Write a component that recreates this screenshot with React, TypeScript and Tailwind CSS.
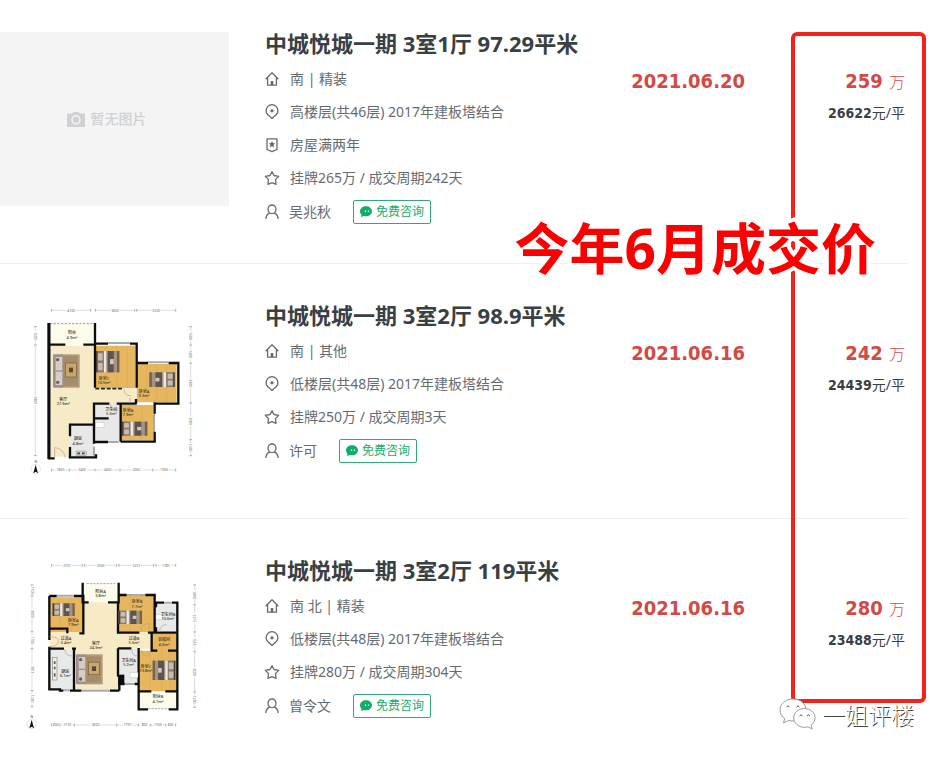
import type { ReactNode } from "react";

type IconName = "home" | "pin" | "badge" | "star" | "user";

type Listing = {
  title: string;
  plan: ReactNode;
  facts: { icon: IconName; text: string }[];
  agent: string;
  date: string;
  total: string;
  unit: string;
};

const iconPaths: Record<IconName, ReactNode> = {
  home: (
    <>
      <path d="M0.6 7.2 7 .8l6.400 6.400M2.600 5.800v7.400h8.800V5.800" />
      <path d="M7 13.200V9" strokeWidth="2.600" />
    </>
  ),
  pin: (
    <>
      <path d="M7 13.400 2.700 9.600a5.900 5.900 0 1 1 8.600 0Z" />
      <circle cx="7" cy="5.800" r="1" fill="currentColor" />
    </>
  ),
  badge: (
    <>
      <path d="M2 .9h10v10.600l-5 2.200-5-2.200Z" />
      <path d="m7 3 1 2.100 2.200.300-1.600 1.600.4 2.300L7 8.200l-2 1.100.4-2.300-1.600-1.600 2.200-.3Z" fill="currentColor" stroke="none" />
    </>
  ),
  star: <path d="m7 .7 2 3.800 4.700.8-3.200 3.300.5 4.700L7 11.700l-4 1.600.5-4.700L.3 5.300 5 4.500Z" />,
  user: (
    <>
      <ellipse cx="7" cy="4.300" rx="4" ry="4.300" />
      <path d="M4.800 7.800C2.300 8.900 1 11 .8 14M9.200 7.800c2.500 1.100 3.800 3.200 4 6.200" />
    </>
  ),
};

function Icon({ name }: { name: IconName }) {
  return (
    <svg viewBox="0 0 14 14" className="h-3.5 w-3.5 shrink-0 overflow-visible" fill="none" stroke="currentColor" strokeWidth="1.3" strokeLinejoin="round" aria-hidden="true">
      {iconPaths[name]}
    </svg>
  );
}

function NoPicture() {
  return (
    <div className="flex h-[174px] w-[229px] shrink-0 items-center justify-center gap-1.5 bg-[#f4f4f4] pr-4">
      <svg viewBox="0 0 18 15" className="h-[15px] w-[18px]" aria-hidden="true">
        <path d="M0 1.500h5L6.500 0h5L13 1.500h5V15H0Z" fill="#cfd1d4" />
        <circle cx="9" cy="7.800" r="4" fill="none" stroke="#f4f4f4" strokeWidth="1.500" />
      </svg>
      <span className="text-sm font-medium text-[#cfd1d4]">暂无图片</span>
    </div>
  );
}

function PlanFrame({ label, children }: { label: string; children: ReactNode }) {
  return (
    <svg viewBox="0 0 229 174" role="img" aria-label={label} className="h-[174px] w-[229px] shrink-0 overflow-visible">
      <g transform="translate(20 -9) scale(.33333)">{children}</g>
    </svg>
  );
}

function Bed({ x, y, w, h, flip = false }: { x: number; y: number; w: number; h: number; flip?: boolean }) {
  return (
    <g transform={flip ? `translate(${x + w} ${y}) scale(-1 1)` : `translate(${x} ${y})`}>
      <rect width={w} height={h} fill="#a39384" />
      <rect width={w * 0.34} height={h} fill="#8a7a6c" />
      <rect width="4" height={h} fill="#4a3d34" />
      <rect x="6" y={h * 0.1} width={w * 0.2} height={h * 0.34} rx="3" fill="#c9bcae" />
      <rect x="6" y={h * 0.56} width={w * 0.2} height={h * 0.34} rx="3" fill="#c9bcae" />
      <rect x={w * 0.34} width={w * 0.1} height={h} fill="#efe9e2" />
      <rect x={w * 0.5} width={w * 0.26} height={h} fill="#5d544e" />
      <rect x={w * 0.6} y={h * 0.38} width={w * 0.16} height={h * 0.24} fill="#cfc8bf" />
      <rect x={w * 0.9} width={w * 0.1} height={h} fill="#7c6148" />
    </g>
  );
}

function Sofa({ x, y, h }: { x: number; y: number; h: number }) {
  return (
    <g transform={`translate(${x} ${y})`}>
      <rect x="24" width="56" height={h} fill="#b19a7b" />
      <rect x="30" y="6" width="44" height={h - 12} fill="#a58c6c" />
      <rect x="38" y={h * 0.26} width="32" height={h * 0.42} fill="#c6a86b" stroke="#75603f" strokeWidth="2" />
      <rect x="48" y={h * 0.4} width="12" height="14" fill="#5e4632" />
      <rect width="30" height={h} rx="4" fill="#9c918a" />
      <rect x="8" y="8" width="20" height={h / 2 - 10} fill="#d6cdc6" />
      <rect x="8" y={h / 2 + 2} width="20" height={h / 2 - 10} fill="#d6cdc6" />
      <circle cx="14" cy="16" r="5" fill="#6b5f5a" />
      <circle cx="14" cy={h - 16} r="5" fill="#6b5f5a" />
    </g>
  );
}

function RoomLabel({ x, y, name, area }: { x: number; y: number; name: string; area: string }) {
  return (
    <text x={x} y={y} textAnchor="middle" fontSize="12" fontWeight="500" fill="#3a3024">
      {name}
      <tspan x={x} dy="13">
        {area}
      </tspan>
    </text>
  );
}

function Ruler({ ticks, at, vertical = false, values }: { ticks: number[]; at: number; vertical?: boolean; values: string[] }) {
  return (
    <g transform={vertical ? `translate(${at} 0) rotate(90) scale(1 -1)` : `translate(0 ${at})`} fontSize="10" fill="#666" textAnchor="middle">
      <path d={ticks.map((t) => `M${t} -4v8`).join("")} stroke="#777" strokeWidth="2" />
      {values.map((v, i) => {
        const mid = (ticks[i] + ticks[i + 1]) / 2;
        return (
          <g key={i}>
            <path d={`M${ticks[i]} 0H${Math.max(ticks[i], mid - 14)}M${Math.min(ticks[i + 1], mid + 14)} 0H${ticks[i + 1]}`} stroke="#ccc" strokeWidth="2" />
            <text transform={vertical ? `translate(${mid} 0) scale(-1 1) rotate(180)` : `translate(${mid} 0)`} y="4">
              {v}
            </text>
          </g>
        );
      })}
    </g>
  );
}

function Compass({ x, y }: { x: number; y: number }) {
  return (
    <g transform={`translate(${x} ${y})`}>
      <circle r="14" fill="#fff" stroke="#ccc" strokeWidth="1.500" />
      <path d="M0-13 7 13 0 8-7 13Z" fill="#111" />
      <text y="-18" fontSize="10" textAnchor="middle" fill="#333">
        N
      </text>
    </g>
  );
}

function PlanA() {
  return (
    <PlanFrame label="三室两厅户型图">
      <Ruler at={46} ticks={[95, 212, 226, 344, 350, 467]} values={["4100", "", "3600", "", "3200"]} />
      <Ruler at={525} ticks={[95, 148, 225, 300, 398, 467]} values={["1800", "2400", "2400", "3000", "1900"]} />
      <Ruler at={46} vertical ticks={[95, 150, 482]} values={["1500", "9800"]} />
      <Ruler at={512} vertical ticks={[95, 150, 205, 324, 434, 482]} values={["1500", "1400", "3300", "3000", "1400"]} />
      <path d="M92 152H222V283H347V327H224V387H150V485H92Z" fill="#f6ebc6" />
      <path d="M92 92H222V148H92Z" fill="#fdfcea" />
      <path d="M226 152H346V280H226ZM350 207H470V322H350ZM304 330H400V436H304Z" fill="#e6b75f" />
      <path d="M258 152v128M290 152v128M322 152v128M380 207v115M410 207v115M440 207v115M330 330v106M365 330v106" stroke="#d8a54d" strokeWidth="1.500" />
      <path d="M224 326H300V438H224ZM150 390H222V484H150Z" fill="#e8e8e8" />
      <rect x="226" y="383" width="26" height="15" fill="#fff" stroke="#aaa" />
      <rect x="168" y="468" width="32" height="14" fill="#cfd6d1" stroke="#777" />
      <path d="M172 475h8M186 475h8" stroke="#444" strokeWidth="5" />
      <path d="M90 86H222" stroke="#999" strokeWidth="3" strokeDasharray="7 4" />
      <path d="M264 144H330M384 202H446M402 356V410M264 441H296M222 455V482" stroke="#a9a9a9" strokeWidth="6" />
      <path
        d="M88 84V490H104M85 149H136M190 149H222M225 84V278M225 146H264M330 146H350V278M350 204H384M446 204H475V326H404M404 322V356M404 410V440H302M302 326V440M264 441H238V441H222V326H268M290 326H350M348 312V326M146 487H228V478M150 487V456M150 424V389H222V446M222 370H266"
        fill="none"
        stroke="#0d0d0d"
        strokeWidth="7"
      />
      <path d="M85 84V492" stroke="#0d0d0d" strokeWidth="6" />
      <path d="M226 281H306" stroke="#222" strokeWidth="5" strokeDasharray="12 5" />
      <path d="M104 488V458Q130 460 136 488M312 281Q312 302 332 302M330 325V308M270 326Q276 350 294 346" fill="none" stroke="#b99a80" strokeWidth="2" />
      <Sofa x={99} y={178} h={100} />
      <Bed x={228} y={168} w={70} h={64} />
      <Bed x={388} y={232} w={76} h={44} flip />
      <Bed x={306} y={380} w={76} h={42} />
      <RoomLabel x={156} y={118} name="阳台" area="4.9m²" />
      <RoomLabel x={130} y={317} name="客厅" area="27.6m²" />
      <RoomLabel x={252} y={254} name="卧室C" area="10.5m²" />
      <RoomLabel x={372} y={294} name="卧室A" area="9.3m²" />
      <RoomLabel x={274} y={348} name="卫生间" area="5.3m²" />
      <RoomLabel x={324} y={351} name="卧室B" area="7.9m²" />
      <RoomLabel x={174} y={436} name="厨房" area="4.8m²" />
      <Compass x={47} y={522} />
    </PlanFrame>
  );
}

function PlanB() {
  return (
    <PlanFrame label="三室两厅两卫户型图">
      <Ruler at={46} ticks={[95, 187, 194, 290, 297, 401, 408, 467]} values={["2707", "", "3000", "", "3213", "", "1785"]} />
      <Ruler at={525} ticks={[95, 120, 163, 290, 355, 392, 437, 467]} values={["800", "1570", "3600", "1797", "800", "1500", "800"]} />
      <Ruler at={36} vertical ticks={[105, 138, 245, 296, 422, 470]} values={["1100", "3000", "1700", "3813", "1400"]} />
      <Ruler at={524} vertical ticks={[105, 164, 246, 305, 426, 472]} values={["1800", "2275", "1555", "3500", "1200"]} />
      <path d="M192 157H293V246H394V296H294V420H164V296H90V244H192Z" fill="#f6ebc6" />
      <path d="M194 104H292V156H194ZM360 426H470V474H360Z" fill="#fdfcea" />
      <path d="M90 142H190V246H90ZM295 138H402V246H295ZM395 250H470V302H395ZM360 302H470V424H360Z" fill="#e6b75f" />
      <path d="M120 142v102M155 142v102M330 138v108M365 138v108M390 302v120M425 252v170M450 252v170" stroke="#d8a54d" strokeWidth="1.500" />
      <path d="M90 298H160V418H90ZM406 162H470V247H406ZM295 296H356V400H295Z" fill="#e8e9e9" />
      <path d="M200 101H286M384 476H446" stroke="#aaa" strokeWidth="3" strokeDasharray="7 3" />
      <path d="M110 137H162M320 135H376M432 158H456M130 421H150M184 422H270M314 402H344" stroke="#aaa" strokeWidth="6" />
      <path
        d="M188 98V157H206M264 157H296V98M88 138H110M162 138H190V250H178M88 138V236H142V250M88 270V238M88 290V418H120V422H130M150 422H184M162 296V420M88 296H132M156 296H168M270 422H298M298 376V422M294 402H314M344 402H356M356 294V478H384M446 478H472V158H456M432 158H408V172M294 157V248H358M294 135H320M376 135H404V246M384 248H472M395 248V302H412M444 302H472M294 295V380M294 295H334M358 424H394M436 424H472M408 232V248"
        fill="none"
        stroke="#0d0d0d"
        strokeWidth="7"
      />
      <rect x="295" y="374" width="18" height="28" fill="#0d0d0d" />
      <path d="M88 260Q118 260 116 274Q112 290 88 290M134 298Q136 318 156 318M362 244Q364 220 388 220V244M418 246Q420 224 440 224M364 300Q364 318 386 318L392 302M336 298Q336 318 352 318" fill="none" stroke="#b9a08a" strokeWidth="2" />
      <rect x="97" y="322" width="14" height="68" fill="#f3f3dd" stroke="#888" strokeWidth="2" />
      <path d="M104 334v8M104 350v8M104 370v10" stroke="#555" strokeWidth="5" />
      <rect x="408" y="194" width="20" height="14" fill="#fff" stroke="#aaa" />
      <rect x="330" y="368" width="24" height="14" fill="#fff" stroke="#aaa" />
      <Bed x={98} y={160} w={66} h={38} />
      <Bed x={296} y={182} w={70} h={40} />
      <Bed x={398} y={332} w={68} h={58} flip />
      <Sofa x={168} y={313} h={90} />
      <RoomLabel x={242} y={128} name="阳台A" area="3.8m²" />
      <RoomLabel x={160} y={216} name="卧室A" area="7.9m²" />
      <RoomLabel x={351} y={160} name="卧室B" area="7.7m²" />
      <RoomLabel x={444} y={198} name="卫生间B" area="10.6m²" />
      <RoomLabel x={138} y={270} name="过道A" area="3.4m²" />
      <RoomLabel x={228} y={284} name="客厅" area="24.3m²" />
      <RoomLabel x={342} y={270} name="过道B" area="5.6m²" />
      <RoomLabel x={432} y={274} name="衣帽间" area="4.0m²" />
      <RoomLabel x={326} y={336} name="卫生间A" area="5.2m²" />
      <RoomLabel x={378} y={354} name="卧室C" area="13.8m²" />
      <RoomLabel x={136} y={368} name="厨房" area="6.1m²" />
      <RoomLabel x={414} y={445} name="阳台B" area="4.1m²" />
      <Compass x={35} y={522} />
    </PlanFrame>
  );
}

const listings: Listing[] = [
  {
    title: "中城悦城一期 3室1厅 97.29平米",
    plan: <NoPicture />,
    facts: [
      { icon: "home", text: "南 | 精装" },
      { icon: "pin", text: "高楼层(共46层) 2017年建板塔结合" },
      { icon: "badge", text: "房屋满两年" },
      { icon: "star", text: "挂牌265万 / 成交周期242天" },
    ],
    agent: "吴兆秋",
    date: "2021.06.20",
    total: "259",
    unit: "26622",
  },
  {
    title: "中城悦城一期 3室2厅 98.9平米",
    plan: <PlanA />,
    facts: [
      { icon: "home", text: "南 | 其他" },
      { icon: "pin", text: "低楼层(共48层) 2017年建板塔结合" },
      { icon: "star", text: "挂牌250万 / 成交周期3天" },
    ],
    agent: "许可",
    date: "2021.06.16",
    total: "242",
    unit: "24439",
  },
  {
    title: "中城悦城一期 3室2厅 119平米",
    plan: <PlanB />,
    facts: [
      { icon: "home", text: "南 北 | 精装" },
      { icon: "pin", text: "低楼层(共48层) 2017年建板塔结合" },
      { icon: "star", text: "挂牌280万 / 成交周期304天" },
    ],
    agent: "曾令文",
    date: "2021.06.16",
    total: "280",
    unit: "23488",
  },
];

function ConsultButton() {
  return (
    <button type="button" className="flex h-6 items-center gap-1 rounded-[2px] border border-[#2fab75] px-1.5 text-xs text-[#16ad68]">
      <svg viewBox="0 0 12 12" className="h-3 w-3" aria-hidden="true">
        <path d="M6 .3C9.300.3 12 2.400 12 5.300s-2.700 5-6 5c-.9 0-1.700-.1-2.400-.4L1.200 11.200l.3-2.400C.6 7.900 0 6.700 0 5.300 0 2.400 2.700.3 6 .3Z" fill="#0fad65" />
        <path d="M5.500 4.500v1.500M8.500 4.500v1.500" stroke="#fff" strokeWidth="1.200" />
      </svg>
      免费咨询
    </button>
  );
}

function ListingRow({ item }: { item: Listing }) {
  return (
    <li className="flex border-b border-[#eeeeee] py-10 first:pt-8 first:pb-[39px] last:border-b-0 last:pb-6">
      {item.plan}
      <div className="ml-9 min-w-0 flex-1">
        <h2 className="mb-2 text-[22px] leading-[22px] font-bold whitespace-nowrap text-[#394043]">
          <a href="#detail">{item.title}</a>
        </h2>
        {item.facts.map((fact) => (
          <p key={fact.icon} className="flex h-[33px] items-center gap-[11px] text-sm whitespace-nowrap text-[#666b70]">
            <Icon name={fact.icon} />
            {fact.text}
          </p>
        ))}
        <div className="mt-1.5 flex h-6 items-center text-sm text-[#666b70]">
          <Icon name="user" />
          <span className="mr-[22px] ml-2.5">{item.agent}</span>
          <ConsultButton />
        </div>
      </div>
      <div className="shrink-0 pt-[35px] font-['DejaVu_Sans_Condensed','Noto_Sans','Noto_Sans_CJK_SC',sans-serif] text-xl leading-7 font-bold text-[#d14b46]">{item.date}</div>
      <div className="w-[163px] shrink-0 pt-[35px] pr-[3px] text-right font-['DejaVu_Sans_Condensed','Noto_Sans','Noto_Sans_CJK_SC',sans-serif]">
        <p className="text-xl leading-7 font-bold text-[#d14b46]">
          {item.total} <span className="font-['Noto_Sans','Noto_Sans_CJK_SC',sans-serif] text-base font-light">万</span>
        </p>
        <p className="mt-2 text-sm leading-5 font-bold text-[#394043]">
          {item.unit}
          <span className="font-['Noto_Sans','Noto_Sans_CJK_SC',sans-serif] font-normal">元/平</span>
        </p>
      </div>
    </li>
  );
}

function Watermark() {
  return (
    <div className="absolute top-[698px] right-[30px] flex items-center gap-1.5 text-white">
      <svg viewBox="0 0 37 34" className="h-[34px] w-[37px]" fill="#fff" stroke="#999" strokeWidth="1" aria-hidden="true">
        <path d="M14 1C6.500 1 1 5.900 1 12c0 3.500 1.700 6.500 4.700 8.500L4.500 25l5-2.500c1.500.4 3 .5 4.500.5 7.500 0 13-4.900 13-11S21.500 1 14 1Z" />
        <path d="M25.500 10.500c6 0 10.500 4.200 10.500 9.300 0 2.900-1.500 5.300-3.700 7l.8 4.200-4-2.200c-1.100.3-2.300.5-3.600.5-6 0-10.800-4.300-10.800-9.500s4.800-9.300 10.800-9.300Z" />
        <path d="M7.500 9q1.500-2.500 3 0M17.500 9q1.500-2.500 3 0M20.500 18q1.500-2.500 3 0M28 18q1.500-2.500 3 0" fill="none" stroke="#555" />
      </svg>
      <span className="text-[23px] leading-[34px] font-light [text-shadow:1px_1px_0_#444]">一姐评楼</span>
    </div>
  );
}

export default function App() {
  return (
    <main className="relative min-h-screen bg-white font-['Noto_Sans','Noto_Sans_CJK_SC',sans-serif]">
      <ul className="pr-9">
        {listings.map((item) => (
          <ListingRow key={item.title} item={item} />
        ))}
      </ul>
      <div className="pointer-events-none absolute top-8 right-[18px] h-[671px] w-[135px] rounded-[6px] border-4 border-[#f3221b]" />
      <p className="absolute top-[216px] right-[68px] text-[55px] leading-[64px] font-bold whitespace-nowrap text-[#fb0000] [-webkit-text-stroke:8px_white] [paint-order:stroke_fill]">
        今年6月成交价
      </p>
      <Watermark />
    </main>
  );
}
